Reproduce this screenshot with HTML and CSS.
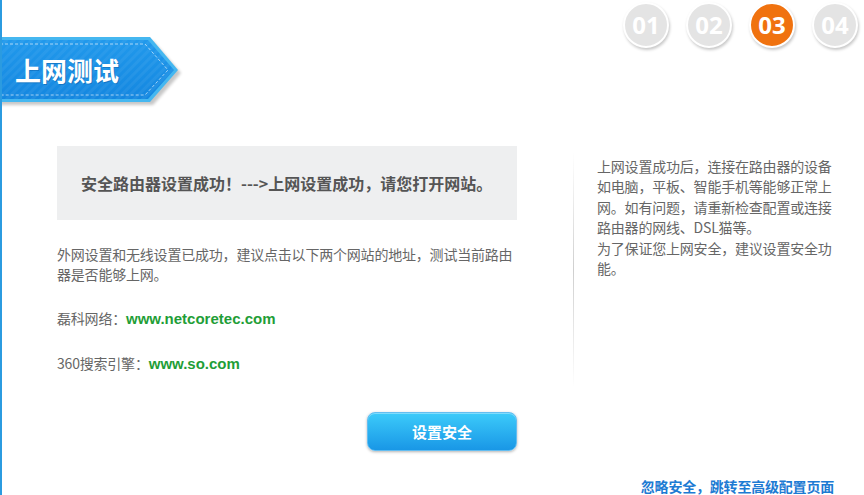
FILE: index.html
```html
<!DOCTYPE html>
<html lang="zh-CN">
<head>
  <meta charset="UTF-8" />
  <meta name="viewport" content="width=device-width, initial-scale=1.0"/>
  <title>上网测试</title>
  <link rel="stylesheet" href="styles.css">
</head>
<body>
  <div class="page">
    <div class="header">
      <div class="banner">
        <svg width="186" height="74" viewBox="0 0 186 74">
          <defs>
            <linearGradient id="fill" x1="0" y1="0" x2="0" y2="1">
              <stop offset="0" stop-color="#2199ec"/>
              <stop offset="1" stop-color="#1487e0"/>
            </linearGradient>
            <pattern id="stripes" width="6" height="6" patternUnits="userSpaceOnUse" patternTransform="rotate(45)">
              <rect width="3" height="6" fill="#ffffff" opacity="0.05"/>
            </pattern>
            <filter id="blur" x="-10%" y="-10%" width="130%" height="140%">
              <feGaussianBlur stdDeviation="1.6"/>
            </filter>
          </defs>
          <!-- shadow -->
          <path d="M0,5 H153 L181,37 L153,69 H0 Z" fill="#000" opacity="0.22" filter="url(#blur)"/>
          <path d="M0,1 H150 L178,34 L150,66 H0 Z" fill="#45b7f0"/>
          <path d="M0,4 H148 L174,34 L148,63 H0 Z" fill="url(#fill)"/>
          <path d="M0,4 H148 L174,34 L148,63 H0 Z" fill="url(#stripes)"/>
          <path d="M0,8 H145 L168,34 L145,59 H0" fill="none" stroke="#ffffff" stroke-opacity="0.6" stroke-width="1" stroke-dasharray="3 2"/>
          <text x="16" y="46" class="banner-shadow">上网测试</text>
          <text x="15" y="45" class="banner-title">上网测试</text>
        </svg>
      </div>

      <div class="steps">
        <div class="step">01</div>
        <div class="step">02</div>
        <div class="step active">03</div>
        <div class="step">04</div>
      </div>
    </div>

    <div class="content">
      <div class="main">
        <div class="msg">安全路由器设置成功！---&gt;上网设置成功，请您打开网站。</div>
        <p class="desc">外网设置和无线设置已成功，建议点击以下两个网站的地址，测试当前路由器是否能够上网。</p>
        <p class="site">磊科网络：<a href="#">www.netcoretec.com</a></p>
        <p class="site site2">360搜索引擎：<a href="#">www.so.com</a></p>
        <div class="actions">
          <button class="btn">设置安全</button>
        </div>
      </div>

      <div class="side">
        <p>上网设置成功后，连接在路由器的设备如电脑，平板、智能手机等能够正常上网。如有问题，请重新检查配置或连接路由器的网线、DSL猫等。<br>为了保证您上网安全，建议设置安全功能。</p>
      </div>
    </div>

    <div class="footer">
      <a href="#">忽略安全，跳转至高级配置页面</a>
    </div>
  </div>
</body>
</html>
```

FILE: styles.css
```css
body {
  margin: 0;
  font-family: "Microsoft YaHei", "Noto Sans CJK SC", sans-serif;
  background-color: #fff;
  color: #666;
}

.page {
  height: 495px;
  box-sizing: border-box;
  border-left: 2px solid #2b9be0;
  overflow: hidden;
}

/* header: banner + step circles */
.header {
  display: flex;
  justify-content: space-between;
  align-items: flex-start;
  height: 110px;
}

.banner {
  margin-top: 36px;
  margin-left: -2px;
}

.banner svg {
  display: block;
}

.banner-title,
.banner-shadow {
  font-family: "Microsoft YaHei", "Noto Sans CJK SC", sans-serif;
  font-size: 26px;
  font-weight: 700;
  fill: #fff;
}

.banner-shadow {
  fill: #0b5fa8;
  opacity: 0.5;
}

.steps {
  display: flex;
  gap: 17px;
  margin: 2px 6px 0 0;
}

.step {
  width: 42px;
  height: 42px;
  border-radius: 50%;
  border: 2px solid #fff;
  background-color: #e4e4e4;
  box-shadow: 1px 2px 3px rgba(0, 0, 0, 0.22);
  color: #fff;
  font-family: "Open Sans", "DejaVu Sans", sans-serif;
  font-weight: 700;
  font-size: 24px;
  line-height: 42px;
  text-align: center;
}

.step.active {
  background-color: #f0720f;
}

/* content */
.content {
  display: flex;
  align-items: flex-start;
  padding-left: 55px;
  margin-top: 36px;
}

.main {
  width: 460px;
}

.msg {
  height: 74px;
  line-height: 74px;
  padding-left: 24px;
  background-color: #eeeff0;
  color: #555;
  font-size: 16px;
  font-weight: 700;
}

.desc {
  margin: 24px 0 0;
  width: 462px;
  font-size: 14px;
  line-height: 20px;
  letter-spacing: -0.2px;
}

.site {
  margin: 24px 0 0;
  font-size: 14px;
  line-height: 20px;
  letter-spacing: -0.2px;
}

.site a {
  color: #1f9e37;
  font-family: "Liberation Sans", Arial, sans-serif;
  font-weight: 700;
  font-size: 15px;
  text-decoration: none;
  letter-spacing: 0;
}

.actions {
  display: flex;
  justify-content: flex-end;
  margin-top: 38px;
}

.btn {
  width: 150px;
  height: 39px;
  border: 1px solid #63bdf1;
  border-radius: 8px;
  background: linear-gradient(#3ccbfa, #1997e6);
  box-shadow: 0 1px 3px rgba(0, 0, 0, 0.3), inset 0 1px 0 rgba(255, 255, 255, 0.35);
  color: #fff;
  font-family: "Microsoft YaHei", "Noto Sans CJK SC", sans-serif;
  font-size: 15px;
  font-weight: 700;
  cursor: pointer;
}

.side {
  width: 240px;
  height: 232px;
  margin: 6px 0 0 56px;
  padding: 4px 0 0 24px;
  background: linear-gradient(rgba(200, 200, 200, 0), #cfcfcf 50%, rgba(200, 200, 200, 0)) no-repeat left top / 1px 100%;
}

.side p {
  margin: 0;
  font-size: 14px;
  line-height: 20.4px;
  letter-spacing: -0.2px;
}

.footer {
  margin-top: 24px;
  padding-right: 30px;
  text-align: right;
  line-height: 20px;
}

.footer a {
  color: #1d7bd3;
  font-size: 14px;
  font-weight: 700;
  letter-spacing: -0.2px;
  text-decoration: none;
}
```
